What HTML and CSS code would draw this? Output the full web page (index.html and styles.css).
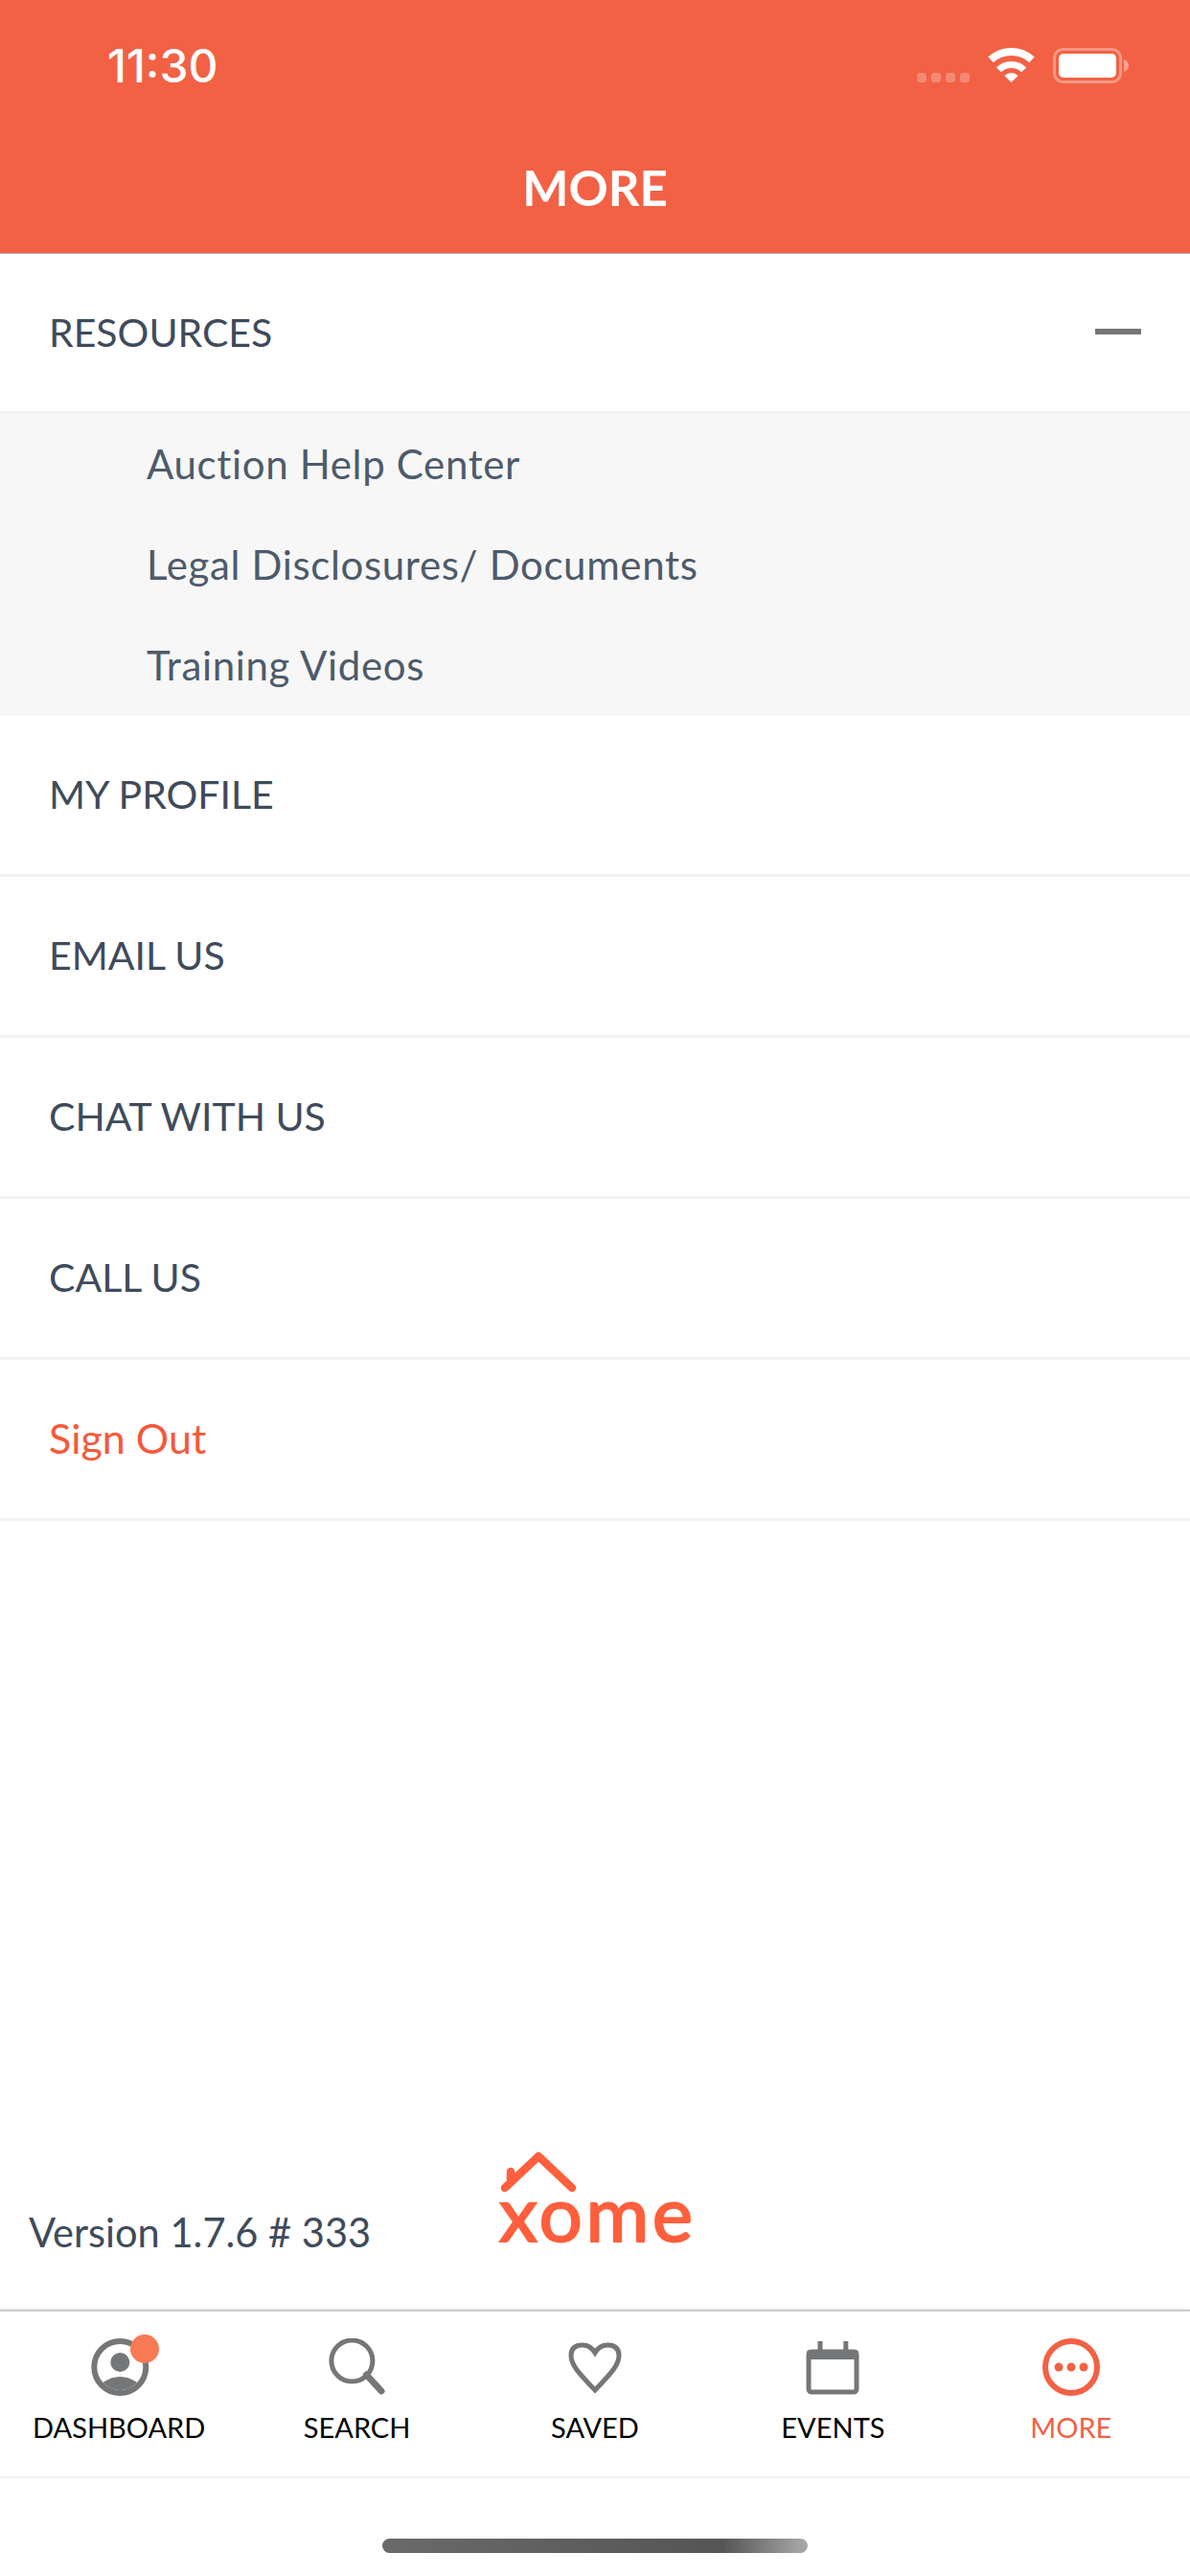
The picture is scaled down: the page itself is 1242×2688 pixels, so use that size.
FILE: index.html
```html
<!DOCTYPE html>
<html lang="en">
<head>
    <meta charset="UTF-8">
    <meta name="viewport" content="width=device-width, initial-scale=1.0">
    <title>More</title>
    <link rel="stylesheet" href="styles.css">
</head>
<body>
    <div class="app">
        <header class="top">
            <div class="status-bar">
                <span class="time">11:30</span>
                <svg class="status-icons" width="222" height="38" viewBox="0 0 222 38">
                    <g fill="#fff" opacity="0.25">
                        <rect x="0" y="26" width="10" height="10" rx="3"/>
                        <rect x="15" y="26" width="10" height="10" rx="3"/>
                        <rect x="30" y="26" width="10" height="10" rx="3"/>
                        <rect x="45" y="26" width="10" height="10" rx="3"/>
                    </g>
                    <g fill="none" stroke="#fff">
                        <path stroke-width="8" d="M77 12.3A32 32 0 0 1 120 12.3"/>
                        <path stroke-width="7" d="M85.4 22.9A18.5 18.5 0 0 1 111.6 22.9"/>
                    </g>
                    <path fill="#fff" d="M98.5 36L91.4 28.9A10 10 0 0 1 105.6 28.9Z"/>
                    <rect x="143.5" y="1.5" width="69" height="34" rx="9" fill="none" stroke="#fff" stroke-width="3" opacity="0.35"/>
                    <rect x="148" y="6" width="60" height="25" rx="5" fill="#fff"/>
                    <path fill="#fff" opacity="0.4" d="M216 12V25C219 24 221 21 221 18.5C221 16 219 13 216 12Z"/>
                </svg>
            </div>
            <h1 class="title">MORE</h1>
        </header>

        <nav class="menu">
            <div class="row">
                <span>RESOURCES</span>
                <span class="minus"></span>
            </div>
            <div class="sub-menu">
                <div class="sub-row">Auction Help Center</div>
                <div class="sub-row">Legal Disclosures/ Documents</div>
                <div class="sub-row">Training Videos</div>
            </div>
            <div class="row">MY PROFILE</div>
            <div class="row">EMAIL US</div>
            <div class="row">CHAT WITH US</div>
            <div class="row">CALL US</div>
            <div class="row sign-out">Sign Out</div>
        </nav>

        <div class="about">
            <span class="version">Version 1.7.6 # 333</span>
            <div class="logo">
                <svg class="roof" width="100" height="56" viewBox="0 0 100 56">
                    <path d="M10 40L45 7L80 40M16 34V23" fill="none" stroke="#ff5f3c" stroke-width="8.5" stroke-linecap="round" stroke-linejoin="round"/>
                </svg>
                <span class="wordmark">xome</span>
            </div>
        </div>

        <div class="tabs">
            <div class="tab">
                <span class="tab-icon">
                    <svg width="64" height="60" viewBox="0 0 64 60">
                        <circle cx="33.3" cy="30" r="27" fill="none" stroke="#757677" stroke-width="6"/>
                        <circle cx="33.3" cy="25" r="10" fill="#757677"/>
                        <path fill="#757677" d="M15.4 46Q33.3 34 51.2 46A24 24 0 0 1 15.4 46Z"/>
                    </svg>
                    <span class="badge"></span>
                </span>
                <span>DASHBOARD</span>
            </div>
            <div class="tab">
                <span class="tab-icon">
                    <svg width="64" height="60" viewBox="0 0 64 60">
                        <circle cx="26.4" cy="23.5" r="21.5" fill="none" stroke="#757677" stroke-width="5"/>
                        <path d="M41.4 38L57 55" stroke="#757677" stroke-width="7" stroke-linecap="round"/>
                    </svg>
                </span>
                <span>SEARCH</span>
            </div>
            <div class="tab">
                <span class="tab-icon">
                    <svg width="64" height="60" viewBox="0 0 64 60">
                        <path fill="none" stroke="#757677" stroke-width="5" d="M32 54C21 42 7 30 7 18C7 10 12 7 19 7C25 7 29 10 32 15C35 10 39 7 45 7C52 7 57 10 57 18C57 30 43 42 32 54Z"/>
                    </svg>
                </span>
                <span>SAVED</span>
            </div>
            <div class="tab">
                <span class="tab-icon">
                    <svg width="64" height="60" viewBox="0 0 64 60">
                        <rect x="7" y="14" width="50" height="42" rx="3" fill="none" stroke="#757677" stroke-width="5"/>
                        <rect x="5" y="12" width="54" height="10" rx="3" fill="#757677"/>
                        <path d="M19 3V14M45.8 3V14" stroke="#757677" stroke-width="5"/>
                    </svg>
                </span>
                <span>EVENTS</span>
            </div>
            <div class="tab active">
                <span class="tab-icon">
                    <svg width="64" height="60" viewBox="0 0 64 60">
                        <circle cx="32" cy="30" r="27" fill="none" stroke="#f26144" stroke-width="6"/>
                        <circle cx="19" cy="30" r="4.5" fill="#f26144"/>
                        <circle cx="32" cy="30" r="4.5" fill="#f26144"/>
                        <circle cx="45" cy="30" r="4.5" fill="#f26144"/>
                    </svg>
                </span>
                <span>MORE</span>
            </div>
        </div>

        <div class="home-area">
            <div class="home-bar"></div>
        </div>
    </div>
</body>
</html>
```

FILE: styles.css
```css
* {
    box-sizing: border-box;
}
body {
    margin: 0;
    background: white;
    font-family: Lato, "Open Sans", sans-serif;
    color: #3f4b5b;
}
.app {
    display: flex;
    flex-direction: column;
    width: 1242px;
    height: 2688px;
    overflow: hidden;
}

/* header */
.top {
    height: 265px;
    background: #f26144;
    border-bottom: 1px solid #b0b2b8;
    color: white;
}
.status-bar {
    display: flex;
    justify-content: space-between;
    align-items: center;
    height: 136px;
    padding: 0 63px 0 112px;
}
.time {
    font-family: Inter, sans-serif;
    font-size: 48px;
    font-weight: 500;
}
.status-icons {
    margin-top: 2px;
}
.title {
    margin: 0;
    padding-bottom: 8px;
    height: 128px;
    line-height: 120px;
    text-align: center;
    font-size: 51px;
    font-weight: 700;
}

/* menu rows */
.row {
    display: flex;
    justify-content: space-between;
    align-items: center;
    height: 168px;
    padding: 0 51px 2px;
    border-bottom: 3px solid #f2f2f2;
    font-size: 41px;
}
.menu > .row:first-child {
    height: 167px;
}
.minus {
    width: 48px;
    height: 6px;
    background: #757575;
}
.sub-menu {
    background: #f7f7f7;
}
.sub-row {
    display: flex;
    align-items: center;
    height: 105px;
    padding: 0 0 2px 153px;
    font-size: 42px;
    letter-spacing: 0.65px;
    color: #4d5b6b;
}
.sign-out {
    font-size: 43px;
    color: #f4593a;
}

/* version + logo */
.about {
    flex: 1;
    display: flex;
    align-items: flex-end;
    padding: 0 0 57px 30px;
}
.version {
    width: 487px;
    font-size: 41.6px;
    line-height: 48px;
}
.logo {
    display: flex;
    flex-direction: column;
    margin-bottom: 15px;
}
.wordmark {
    margin: -21px 0 0 4px;
    font-size: 80px;
    line-height: 60px;
    font-weight: 400;
    letter-spacing: 3.5px;
    -webkit-text-stroke: 2px #ff5f3c;
    color: #ff5f3c;
}

/* bottom tabs */
.tabs {
    display: grid;
    grid-template-columns: repeat(5, 1fr);
    height: 176px;
    padding-top: 28px;
    border-top: 2px solid #cccccc;
    border-bottom: 2px solid #f2f2f2;
    box-shadow: 0 -1px 2px rgba(0,0,0,0.1);
}
.tab {
    display: flex;
    flex-direction: column;
    align-items: center;
    font-size: 29px;
    line-height: 36px;
    color: #000;
}
.tab.active {
    color: #f26144;
}
.tab-icon {
    position: relative;
    display: block;
    width: 64px;
    height: 60px;
    margin-bottom: 15px;
}
.badge {
    position: absolute;
    left: 44px;
    top: -4px;
    width: 30px;
    height: 30px;
    border-radius: 50%;
    background: #f77a55;
}

.home-area {
    display: flex;
    justify-content: center;
    height: 102px;
    padding-top: 63px;
}
.home-bar {
    width: 444px;
    height: 15px;
    border-radius: 8px;
    background: linear-gradient(90deg, #6a6a6a, #555 80%, #aaa);
}
```
